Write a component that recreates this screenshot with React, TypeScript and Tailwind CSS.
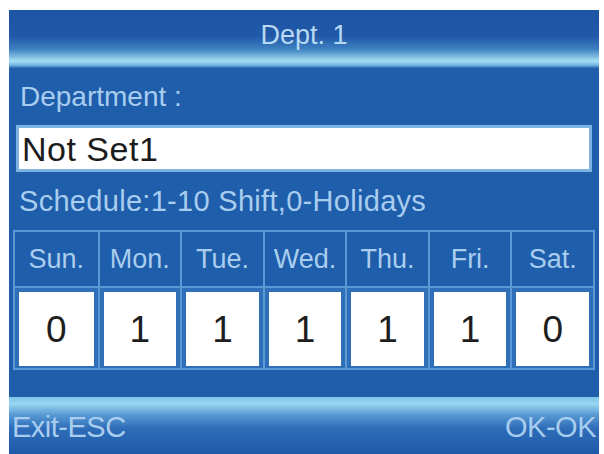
import React from 'react';

/**
 * Dept. 1 - device screen for department schedule settings
 */

const days = [
  { name: 'Sun.', value: 0 },
  { name: 'Mon.', value: 1 },
  { name: 'Tue.', value: 1 },
  { name: 'Wed.', value: 1 },
  { name: 'Thu.', value: 1 },
  { name: 'Fri.', value: 1 },
  { name: 'Sat.', value: 0 },
];

const font = 'font-["Liberation_Sans",Arial,sans-serif]';

export default function App() {
  return (
    <div className={`w-[604px] h-[454px] bg-white pl-[9px] pt-[10px] pr-[5px] overflow-hidden ${font}`}>
      <div className="flex flex-col h-full bg-[#1f5eaa]">
        {/* Title bar */}
        <div className="h-[58px] shrink-0 flex items-start justify-center pt-[10px] bg-[linear-gradient(to_bottom,#1d55a4_0%,#2158a7_45%,#3f82c2_68%,#a6def3_88%,#74b6e2_95%,#2b6bb4_100%)]">
          <span className="text-[27px] leading-[30px] text-[#b8d9f3]">Dept. 1</span>
        </div>

        {/* Department */}
        <div className="h-[57px] shrink-0 flex items-center pl-[11px]">
          <span className="text-[28px] leading-none text-[#a9cdef]">Department :</span>
        </div>
        <div className="mx-[7px] h-[47px] shrink-0 border-[3px] border-[#7db3e2] bg-white flex items-center pl-[3px]">
          <span className="text-[34px] leading-none text-[#1c1c1c] tracking-[0.5px]">Not Set1</span>
        </div>

        {/* Schedule */}
        <div className="h-[58px] shrink-0 flex items-center pl-[10px]">
          <span className="text-[29px] leading-none text-[#a9cdef] tracking-[0.3px]">Schedule:1-10 Shift,0-Holidays</span>
        </div>

        {/* Week grid */}
        <div className="mx-[4px] h-[140px] shrink-0 grid grid-cols-7 border-2 border-[#5a98d6]">
          {days.map((day, index) => (
            <div
              key={day.name}
              className={`flex flex-col ${index > 0 ? 'border-l-2 border-[#5a98d6]' : ''}`}
            >
              <div className="h-[56px] shrink-0 flex items-center justify-center bg-[#1f5eaa] border-b-2 border-[#5a98d6]">
                <span className="text-[27px] leading-none text-[#a9cdef]">{day.name}</span>
              </div>
              <div className="flex-1 bg-[#2f6fb8] px-[4px] pt-[4px] pb-[2px]">
                <div className="h-full bg-white flex items-center justify-center">
                  <span className="text-[37px] leading-none text-[#1e1e1e]">{day.value}</span>
                </div>
              </div>
            </div>
          ))}
        </div>

        <div className="flex-1" />

        {/* Footer */}
        <div className="h-[57px] shrink-0 flex items-center justify-between px-[3px] pt-[4px] bg-[linear-gradient(to_bottom,#7ec4ea_0%,#9ad6f1_12%,#5a9dd5_30%,#2e6cb8_55%,#1f5aa8_100%)]">
          <span className="text-[29px] leading-none text-[#a9cdee] tracking-[-0.5px]">Exit-ESC</span>
          <span className="text-[29px] leading-none text-[#a9cdee] tracking-[-0.5px]">OK-OK</span>
        </div>
      </div>
    </div>
  );
}
